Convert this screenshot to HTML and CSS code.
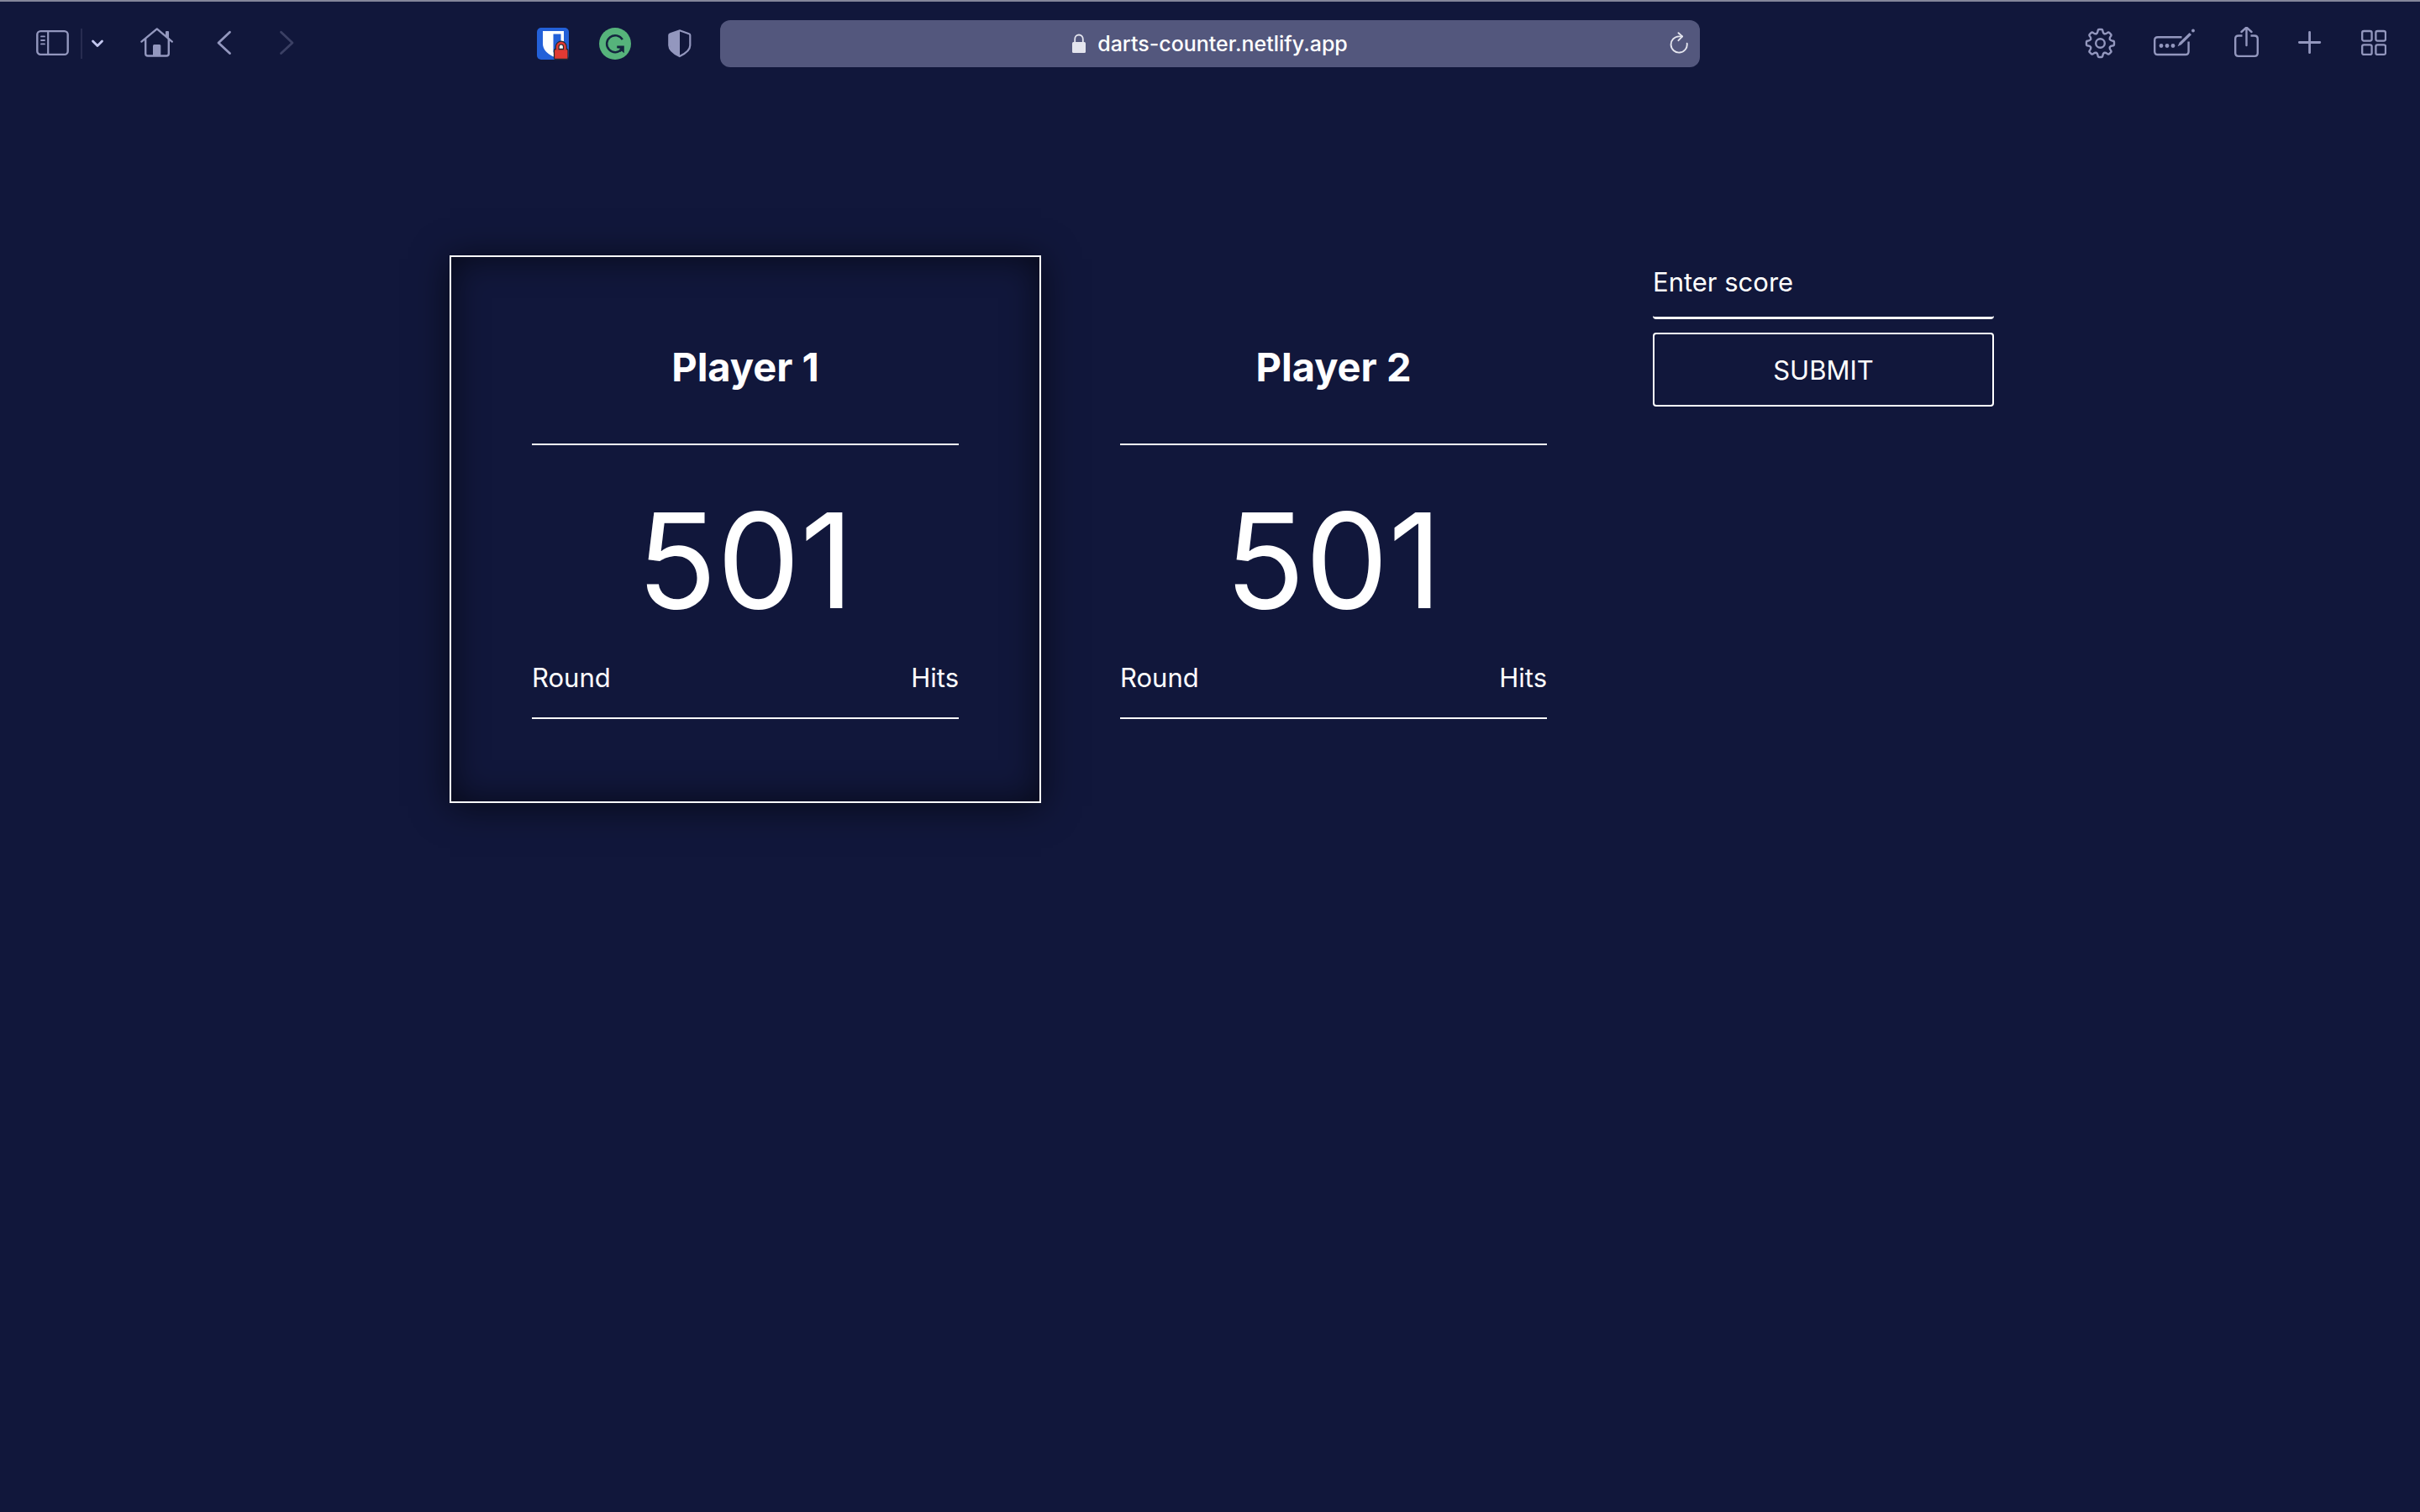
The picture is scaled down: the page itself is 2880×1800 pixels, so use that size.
FILE: index.html
```html
<!DOCTYPE html>
<html lang="en">
<head>
<meta charset="utf-8">
<meta name="viewport" content="width=device-width, initial-scale=1">
<title>Darts Counter</title>
<link rel="stylesheet" href="styles.css">
</head>
<body>
<header class="toolbar">
  <div class="toolbar-side toolbar-start">
    <nav class="nav-tools" aria-label="Navigation">
      <button class="tool" type="button" aria-label="Sidebar">
        <svg width="40" height="40" viewBox="0 0 40 40" fill="none" stroke="currentColor" stroke-width="2.4" stroke-linecap="round"><rect x="1.3" y="5.1" width="36.4" height="27.8" rx="4"/><path d="M14.2 5v28" stroke-width="2.2"/><path d="M6 11.4h4M6 16h4M6 20.4h4" stroke-width="1.8"/></svg>
      </button>
      <span class="tool-divider"></span>
      <button class="tool tool-bright" type="button" aria-label="Tab groups">
        <svg width="20" height="40" viewBox="0 0 20 40" fill="none" stroke="currentColor" stroke-width="2.8" stroke-linecap="round" stroke-linejoin="round"><path d="M4.5 17l5.5 5.6 5.5-5.6"/></svg>
      </button>
      <button class="tool tool-home" type="button" aria-label="Home">
        <svg width="42" height="40" viewBox="0 0 42 40" fill="none" stroke="currentColor" stroke-width="2.4" stroke-linecap="round" stroke-linejoin="round"><path d="M2.4 17.6L20.800 2.400l18 15.200"/><path d="M7.200 14.500v17.200q0 2.800 2.800 2.800h22q2.800 0 2.800-2.800V14.500"/><path d="M16 35V22.500q0-1.500 1.500-1.500h6.300q1.500 0 1.500 1.500V35z" fill="currentColor" stroke="none"/><path d="M31 11V6q0-1 1-1h2q1 0 1 1v8z" fill="currentColor" stroke="none"/></svg>
      </button>
      <button class="tool tool-spaced" type="button" aria-label="Back">
        <svg width="22" height="40" viewBox="0 0 22 40" fill="none" stroke="currentColor" stroke-width="2.8" stroke-linecap="round" stroke-linejoin="round"><path d="M15.500 6.300L2 19l13.500 12.500"/></svg>
      </button>
      <button class="tool tool-spaced" type="button" aria-label="Forward" disabled>
        <svg width="22" height="40" viewBox="0 0 22 40" fill="none" stroke="currentColor" stroke-width="2.8" stroke-linecap="round" stroke-linejoin="round"><path d="M4.500 6.300L18 19 4.500 31.500"/></svg>
      </button>
    </nav>
    <div class="extensions">
      <button class="tool" type="button" aria-label="Bitwarden">
        <svg width="38" height="40" viewBox="0 0 38 40"><rect y="1" width="38" height="38" rx="5" fill="#2360d8"/><path d="M7 5h25v15c0 7-5 11.500-12.500 15.500C12 31.500 7 27 7 20z" fill="#fff"/><path d="M19.500 8.500H28.500V20c0 4-3.500 8-9 10.500z" fill="#2360d8"/><path d="M24.200 27v-3.300a4.600 4.600 0 0 1 9.200 0V27" fill="#fff" stroke="#262a33" stroke-width="5"/><rect x="20.500" y="26.500" width="16.500" height="12" rx="1.500" fill="#e13a33" stroke="#262a33" stroke-width="1.300"/><path d="M24.200 27.500v-3.800a4.600 4.600 0 0 1 9.200 0v3.800" fill="none" stroke="#e13a33" stroke-width="2.600"/></svg>
      </button>
      <button class="tool" type="button" aria-label="Grammarly">
        <svg width="38" height="40" viewBox="0 0 38 40"><circle cx="19" cy="20" r="19" fill="#56b37b"/><path d="M27.800 15.200A10 10 0 1 0 27 26.300" fill="none" stroke="#14253f" stroke-width="2.500"/><path d="M21.300 22.500h8.500v8.700l-3-2.500-1.600 1.300-1.500-2 1.500-2.300-4-.4z" fill="#14253f"/></svg>
      </button>
      <button class="tool" type="button" aria-label="Privacy report">
        <svg width="38" height="40" viewBox="0 0 38 40"><path d="M21.800 4.300L33 8.200q1.300.4 1.300 1.800v12c0 6-5 9.500-12.500 13C14.300 31.500 9.300 28 9.300 22V10q0-1.400 1.300-1.800z" fill="none" stroke="currentColor" stroke-width="2.200"/><path d="M22 4L10 8.500V22c0 6 5 9.500 12 13z" fill="currentColor"/></svg>
      </button>
    </div>
  </div>
  <div class="address">
    <label class="address-field">
      <svg class="lock" width="16" height="24" viewBox="0 0 16 24" aria-hidden="true"><path d="M3.200 11V6.500a4.800 5 0 0 1 9.600 0V11" fill="none" stroke="currentColor" stroke-width="1.800"/><rect y="10" width="16" height="13" rx="1.500" fill="currentColor"/></svg>
      <input class="address-input" type="text" value="darts-counter.netlify.app" aria-label="Address">
    </label>
    <button class="reload" type="button" aria-label="Reload">
      <svg width="22" height="28" viewBox="0 0 22 28" fill="none" stroke="currentColor" stroke-width="1.900" stroke-linecap="round" stroke-linejoin="round"><path d="M20.700 13.800A9.600 9.600 0 1 1 11 5.400H15"/><path d="M10.500 1.200l4.600 4.200-4.600 4.800"/></svg>
    </button>
  </div>
  <div class="toolbar-side toolbar-end">
    <button class="tool" type="button" aria-label="Settings">
      <svg class="gear" width="36" height="40" viewBox="0 0 36 40" fill="none" stroke="currentColor" stroke-width="2.4" stroke-linecap="round" stroke-linejoin="round">
        <defs><path id="tooth" d="M-4.700-11.400Q-3.300-12-3-14.200-2.800-16.500-1.400-16.500H1.400Q2.800-16.500 3-14.200 3.300-12 4.700-11.400"/></defs>
        <g transform="translate(19.500 19.500)">
          <use href="#tooth"/><use href="#tooth" transform="rotate(45)"/><use href="#tooth" transform="rotate(90)"/><use href="#tooth" transform="rotate(135)"/><use href="#tooth" transform="rotate(180)"/><use href="#tooth" transform="rotate(225)"/><use href="#tooth" transform="rotate(270)"/><use href="#tooth" transform="rotate(315)"/>
          <circle r="5.300"/>
        </g>
      </svg>
    </button>
    <button class="tool" type="button" aria-label="AutoFill">
      <svg width="50" height="40" viewBox="0 0 50 40" fill="none" stroke="currentColor" stroke-width="2.400" stroke-linecap="round" stroke-linejoin="round"><path d="M34.500 12.200H6q-3.800 0-3.800 3.800v13.200Q2.200 33 6 33h32.800q3.800 0 3.800-3.800V17.500" stroke-linecap="butt"/><g fill="currentColor" stroke="none"><circle cx="10" cy="22.500" r="2.400"/><circle cx="17" cy="22.500" r="2.400"/><circle cx="24" cy="22.500" r="2.400"/><path d="M29.600 23.200l2-4.400L43.600 6.900l2.400 2.400L33.800 21.200z"/><circle cx="48" cy="4.500" r="1.900"/></g></svg>
    </button>
    <button class="tool" type="button" aria-label="Share">
      <svg width="30" height="40" viewBox="0 0 30 40" fill="none" stroke="currentColor" stroke-width="2.400" stroke-linecap="round" stroke-linejoin="round"><path d="M10.500 10.500H6q-3.800 0-3.800 3.800v16.800q0 3.800 3.800 3.800h19q3.800 0 3.800-3.800V14.300q0-3.800-3.800-3.800H20.500" stroke-linecap="butt"/><path d="M15.500 22V1M9.500 6l6-5.500 6 5.500"/></svg>
    </button>
    <button class="tool" type="button" aria-label="New tab">
      <svg width="30" height="40" viewBox="0 0 30 40" fill="none" stroke="currentColor" stroke-width="2.800" stroke-linecap="round"><path d="M2.400 18.500h24.400M14.600 6.300v24.400"/></svg>
    </button>
    <button class="tool" type="button" aria-label="Tab overview">
      <svg width="30" height="40" viewBox="0 0 30 40" fill="none" stroke="currentColor" stroke-width="2.300"><rect x="1.200" y="5" width="11.400" height="11.600" rx="2"/><rect x="17.400" y="5" width="11.600" height="11.600" rx="2"/><rect x="1.200" y="21.300" width="11.400" height="11.600" rx="2"/><rect x="17.400" y="21.300" width="11.600" height="11.600" rx="2"/></svg>
    </button>
  </div>
</header>

<main class="game">
  <div class="players">
    <section class="player player-active">
      <h2 class="player-name">Player 1</h2>
      <p class="player-score">501</p>
      <table class="history">
        <thead><tr><th scope="col">Round</th><th scope="col">Hits</th></tr></thead>
      </table>
    </section>
    <section class="player">
      <h2 class="player-name">Player 2</h2>
      <p class="player-score">501</p>
      <table class="history">
        <thead><tr><th scope="col">Round</th><th scope="col">Hits</th></tr></thead>
      </table>
    </section>
  </div>
  <form class="score-form">
    <input class="score-input" type="text" inputmode="numeric" placeholder="Enter score" aria-label="Enter score">
    <button class="score-submit" type="submit">SUBMIT</button>
  </form>
</main>
</body>
</html>
```
FILE: styles.css
```css
:root {
  --bg: #11173b;
  --icon: #9397be;
  --icon-bright: #c3c7ef;
  --field: #53577d;
}

* {
  box-sizing: border-box;
}

body {
  margin: 0;
  min-height: 100vh;
  background: var(--bg);
  color: #fff;
  font-family: Inter, "Liberation Sans", sans-serif;
  font-size: 31px;
  line-height: 48px;
}

button,
input {
  margin: 0;
  padding: 0;
  border: 0;
  background: none;
  color: inherit;
  font: inherit;
}

svg {
  display: block;
}

/* Browser toolbar */
.toolbar {
  display: grid;
  grid-template-columns: minmax(0, 1fr) minmax(0, 1166px) minmax(0, 1fr);
  align-items: center;
  height: 104px;
  border-top: 2px solid #84869a;
  padding-bottom: 2px;
}

.toolbar-side,
.nav-tools,
.extensions {
  display: flex;
  align-items: center;
}

.toolbar-start {
  justify-content: space-between;
  padding: 0 32px 0 43px;
}

.toolbar-end {
  justify-content: flex-end;
  gap: 46px;
  padding-right: 40px;
}

.extensions {
  gap: 36px;
}

.tool {
  color: var(--icon);
}

.tool-bright {
  color: var(--icon-bright);
}

.tool:disabled {
  color: #3b4064;
}

.tool-home {
  margin-left: 40px;
}

.tool-spaced {
  margin-left: 50px;
}

.tool-divider {
  width: 2px;
  height: 36px;
  margin: 0 8px 0 13px;
  background: #272c50;
}

.gear {
  overflow: visible;
}

.address {
  display: grid;
  grid-template-columns: 22px 1fr 22px;
  align-items: center;
  height: 56px;
  padding: 0 14px;
  border-radius: 12px;
  background: var(--field);
}

.address-field {
  grid-column: 2;
  display: flex;
  justify-content: center;
  align-items: center;
  gap: 14px;
}

.address-input {
  field-sizing: content;
  font-size: 25px;
  font-weight: 500;
  line-height: 32px;
}

.lock,
.reload {
  color: #e4e5ee;
}

/* Scoreboard */
.game {
  display: flex;
  align-items: flex-start;
  gap: 28px;
  max-width: 1866px;
  margin: 0 auto;
  padding: 200px 0 80px 28px;
}

.players {
  flex: 1404;
  display: grid;
  grid-template-columns: 1fr 1fr;
}

.player {
  padding: 96px 96px 98px;
  border: 2px solid transparent;
}

/* neighbouring frames share their edges */
.player:first-child {
  margin-right: -2px;
}

.player:last-child {
  margin-left: -2px;
}

.player-active {
  border-color: #fff;
  box-shadow: 0 4px 40px rgba(0, 0, 0, 0.6), inset 0 0 40px rgba(0, 0, 0, 0.6);
}

.player-name {
  margin: 0;
  padding-bottom: 56px;
  border-bottom: 2px solid #fff;
  font-size: 47px;
  font-weight: 700;
  line-height: 70px;
  text-align: center;
}

.player-score {
  margin: 42px 0 21px;
  font-size: 157px;
  line-height: 190px;
  text-align: center;
}

.history {
  width: 100%;
  border-collapse: separate;
  border-spacing: 0;
}

.history th {
  padding: 0 0 23px;
  border-bottom: 2px solid #fff;
  font-weight: 400;
  text-align: left;
}

.history th:last-child {
  text-align: right;
}

.score-form {
  flex: 406;
  min-width: 0;
  display: grid;
  gap: 16px;
}

.score-input {
  width: 100%;
  height: 76px;
  padding-bottom: 10px;
  border-bottom: 3px solid #fff;
  border-radius: 4px;
}

.score-input::placeholder {
  color: #fff;
  opacity: 1;
}

.score-submit {
  height: 88px;
  padding-top: 2px;
  border: 2px solid #fff;
  border-radius: 4px;
}
```
